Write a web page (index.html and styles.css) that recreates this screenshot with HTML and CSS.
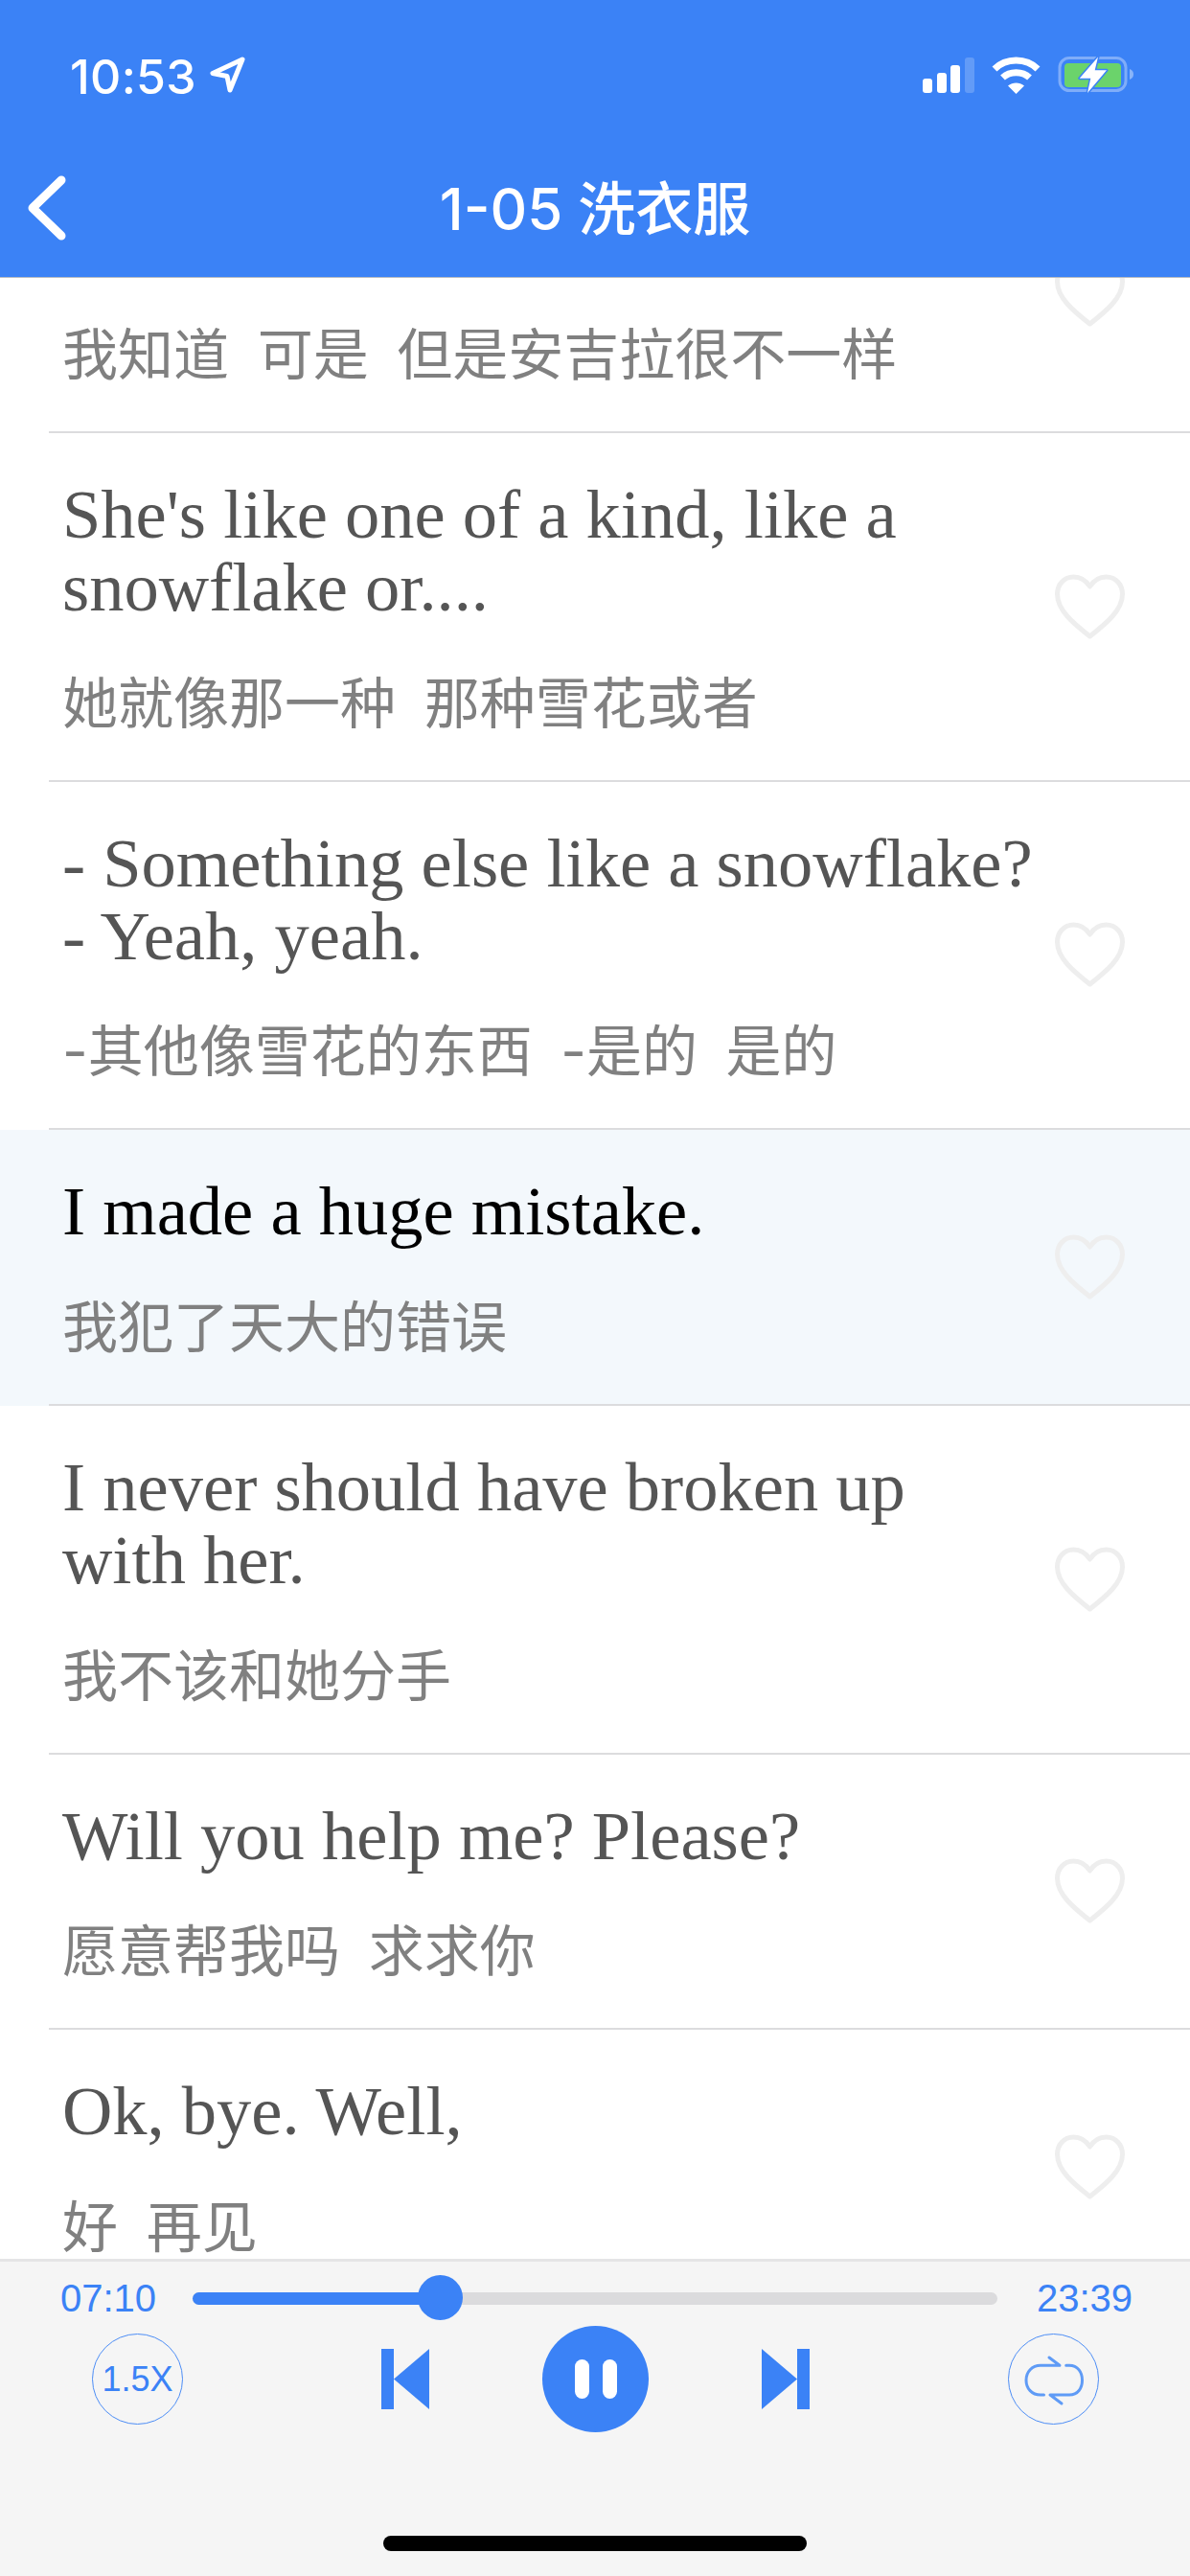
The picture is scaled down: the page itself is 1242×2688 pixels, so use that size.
FILE: index.html
```html
<!DOCTYPE html>
<html lang="zh-CN">
<head>
<meta charset="utf-8">
<title>1-05 洗衣服</title>
<link rel="stylesheet" href="styles.css">
</head>
<body>
<div class="app">
  <header class="header">
    <div class="status">
      <div class="clock">
        <span class="clock-time">10:53</span>
        <svg class="loc" width="38" height="38" viewBox="0 0 38 38"><path d="M34 3 3 17.500 18 20.500 21 35Z" fill="none" stroke="#fff" stroke-width="5" stroke-linejoin="round"/></svg>
      </div>
      <div class="status-icons">
        <svg width="54" height="38" viewBox="0 0 54 38"><rect x="0" y="23" width="10" height="15" rx="3" fill="#fff"/><rect x="15" y="17" width="10" height="21" rx="3" fill="#fff"/><rect x="29" y="9" width="10" height="29" rx="3" fill="#fff"/><rect x="44" y="1" width="10" height="37" rx="3" fill="#fff" opacity=".2"/></svg>
        <svg width="51" height="39" viewBox="0 0 51 39"><path d="M3 13C15 1 36 1 48 13" fill="none" stroke="#fff" stroke-width="7"/><path d="M11.500 22C19 15 32 15 39.500 22" fill="none" stroke="#fff" stroke-width="7"/><path d="M17 30.500C22 26.500 29 26.500 34 30.500L25.500 39Z" fill="#fff"/></svg>
        <svg width="79" height="40" viewBox="0 0 79 40"><rect x="2" y="2.500" width="69" height="34" rx="10" fill="none" stroke="#fff" stroke-opacity=".35" stroke-width="3"/><rect x="7" y="8" width="59" height="25" rx="4" fill="#6bd36b"/><path d="M75 14c3 1 4 3 4 5.500s-1 4.500-4 5.500z" fill="#fff" fill-opacity=".4"/><path d="M42 1.500 22.700 23.700H34.300L31 39 51 15.300H38.700Z" fill="#fff" stroke="#3b82f6" stroke-width="3" stroke-linejoin="round" paint-order="stroke"/></svg>
      </div>
    </div>
    <nav class="nav">
      <svg class="back" width="42" height="72" viewBox="0 0 42 72"><path d="M36 6 6 35 36 64" fill="none" stroke="#fff" stroke-width="9" stroke-linecap="round" stroke-linejoin="round"/></svg>
      <h1 class="title">1-05 洗衣服</h1>
    </nav>
  </header>

  <main class="list">
    <div class="list-scroll">
      <div class="row">
        <div class="row-inner">
          <div class="texts"><div class="en">&nbsp;</div><div class="cn">我知道  可是  但是安吉拉很不一样</div></div>
          <svg class="heart" width="73" height="68" viewBox="0 0 73 68"><path d="M36.500 13C32 6 26 3 19.500 3 9.500 3 2.500 11 2.500 21 2.500 38 20 52 36.500 65 53 52 70.500 38 70.500 21 70.500 11 63.500 3 53.500 3 47 3 41 6 36.500 13Z"/></svg>
        </div>
      </div>
      <div class="row">
        <div class="row-inner">
          <div class="texts"><div class="en">She's like one of a kind, like a snowflake or....</div><div class="cn">她就像那一种  那种雪花或者</div></div>
          <svg class="heart" width="73" height="68" viewBox="0 0 73 68"><path d="M36.500 13C32 6 26 3 19.500 3 9.500 3 2.500 11 2.500 21 2.500 38 20 52 36.500 65 53 52 70.500 38 70.500 21 70.500 11 63.500 3 53.500 3 47 3 41 6 36.500 13Z"/></svg>
        </div>
      </div>
      <div class="row">
        <div class="row-inner">
          <div class="texts"><div class="en">- Something else like a snowflake?<br>- Yeah, yeah.</div><div class="cn">-其他像雪花的东西  -是的  是的</div></div>
          <svg class="heart" width="73" height="68" viewBox="0 0 73 68"><path d="M36.500 13C32 6 26 3 19.500 3 9.500 3 2.500 11 2.500 21 2.500 38 20 52 36.500 65 53 52 70.500 38 70.500 21 70.500 11 63.500 3 53.500 3 47 3 41 6 36.500 13Z"/></svg>
        </div>
      </div>
      <div class="row row-active">
        <div class="row-inner">
          <div class="texts"><div class="en">I made a huge mistake.</div><div class="cn">我犯了天大的错误</div></div>
          <svg class="heart" width="73" height="68" viewBox="0 0 73 68"><path d="M36.500 13C32 6 26 3 19.500 3 9.500 3 2.500 11 2.500 21 2.500 38 20 52 36.500 65 53 52 70.500 38 70.500 21 70.500 11 63.500 3 53.500 3 47 3 41 6 36.500 13Z"/></svg>
        </div>
      </div>
      <div class="row">
        <div class="row-inner">
          <div class="texts"><div class="en">I never should have broken up with her.</div><div class="cn">我不该和她分手</div></div>
          <svg class="heart" width="73" height="68" viewBox="0 0 73 68"><path d="M36.500 13C32 6 26 3 19.500 3 9.500 3 2.500 11 2.500 21 2.500 38 20 52 36.500 65 53 52 70.500 38 70.500 21 70.500 11 63.500 3 53.500 3 47 3 41 6 36.500 13Z"/></svg>
        </div>
      </div>
      <div class="row">
        <div class="row-inner">
          <div class="texts"><div class="en">Will you help me? Please?</div><div class="cn">愿意帮我吗  求求你</div></div>
          <svg class="heart" width="73" height="68" viewBox="0 0 73 68"><path d="M36.500 13C32 6 26 3 19.500 3 9.500 3 2.500 11 2.500 21 2.500 38 20 52 36.500 65 53 52 70.500 38 70.500 21 70.500 11 63.500 3 53.500 3 47 3 41 6 36.500 13Z"/></svg>
        </div>
      </div>
      <div class="row">
        <div class="row-inner">
          <div class="texts"><div class="en">Ok, bye. Well,</div><div class="cn">好  再见</div></div>
          <svg class="heart" width="73" height="68" viewBox="0 0 73 68"><path d="M36.500 13C32 6 26 3 19.500 3 9.500 3 2.500 11 2.500 21 2.500 38 20 52 36.500 65 53 52 70.500 38 70.500 21 70.500 11 63.500 3 53.500 3 47 3 41 6 36.500 13Z"/></svg>
        </div>
      </div>
    </div>
  </main>

  <footer class="player">
    <div class="progress-row">
      <span class="time">07:10</span>
      <div class="track">
        <div class="fill" style="width:30.8%"><span class="thumb"></span></div>
      </div>
      <span class="time">23:39</span>
    </div>
    <div class="controls">
      <div class="ring speed">1.5X</div>
      <div class="transport">
        <svg width="50" height="63" viewBox="0 0 50 63"><rect width="13" height="63" fill="#3b82f6"/><path d="M13 31.500 50 0V63Z" fill="#3b82f6"/></svg>
        <div class="play">
          <span class="pause-bar"></span><span class="pause-bar"></span>
        </div>
        <svg width="50" height="63" viewBox="0 0 50 63"><rect x="37" width="13" height="63" fill="#3b82f6"/><path d="M37 31.500 0 0V63Z" fill="#3b82f6"/></svg>
      </div>
      <div class="ring">
        <svg width="95" height="95" viewBox="0 0 95 95"><g fill="none" stroke="#5f9bf6" stroke-width="3" stroke-linecap="round" stroke-linejoin="round"><path d="M43 25l11 8.300H34C25 33.300 19 40 19 48.700S25 64 34 64H37.500"/><path d="M56 73l-12-9H64C73 64 77.500 57 77.500 48.700S73 33.300 64 33.300H60.700"/></g></svg>
      </div>
    </div>
    <div class="home-bar"></div>
  </footer>
</div>
</body>
</html>
```

FILE: styles.css
```css
* { box-sizing: border-box; }
html, body { margin: 0; padding: 0; }
body { background: #fff; font-family: "Liberation Sans", "Noto Sans CJK SC", sans-serif; }

.app { width: 1242px; height: 2688px; display: flex; flex-direction: column; overflow: hidden; }

.header { flex: none; height: 290px; background: #3b82f6; border-bottom: 1px solid #b9bcc2; padding-top: 58px; color: #fff; position: relative; z-index: 1; }
.status { height: 40px; display: flex; justify-content: space-between; align-items: center; padding: 0 59px 0 73px; }
.clock { display: flex; align-items: center; gap: 14px; }
.clock-time { font-family: Inter, "Liberation Sans", sans-serif; font-size: 50px; font-weight: 500; line-height: 40px; letter-spacing: .3px; padding-top: 4px; }
.loc { display: block; }
.status-icons { display: flex; align-items: center; gap: 18px; }
.status-icons svg { display: block; }

.nav { margin-top: 58px; height: 124px; display: grid; grid-template-columns: 1fr auto 1fr; align-items: center; padding-left: 28px; padding-right: 28px; }
.back { display: block; }
.title { margin: 0; font-size: 60px; font-weight: 500; line-height: 124px; white-space: nowrap; font-family: Inter, "Noto Sans CJK SC", sans-serif; }

.list { flex: 1; min-height: 0; overflow: hidden; }
.list-scroll { margin-top: -125.67px; }
.row-active { background: #f3f8fc; }
.row-inner { margin-left: 51px; padding: 0 68px 0 14px; display: flex; align-items: center; gap: 16px; border-bottom: 2px solid #dcdcde; }
.texts { flex: 1; min-width: 0; padding: 47px 0 40px; }
.en { font-family: "Liberation Serif", serif; font-size: 72.5px; line-height: 76px; color: #555; }
.cn { margin-top: 42.67px; font-family: Inter, "Noto Sans CJK SC", sans-serif; font-size: 58px; line-height: 80px; color: #808080; white-space: pre-wrap; word-spacing: -1.5px; }
.row-active .en { color: #000; }
.heart { flex: none; display: block; fill: none; stroke: #eeeeee; stroke-width: 5; stroke-linejoin: round; }

.player { flex: none; height: 331px; background: #f5f5f5; border-top: 3px solid #e5e5e6; padding-top: 9px; }
.progress-row { height: 58px; padding: 0 60px 0 63px; display: flex; align-items: center; gap: 38px; }
.time { font-size: 40px; line-height: 58px; color: #3b82f6; }
.track { flex: 1; height: 13px; margin-right: 3px; border-radius: 7px; background: #dbdbdd; }
.fill { position: relative; height: 100%; background: #3b82f6; border-radius: 7px 0 0 7px; }
.thumb { position: absolute; right: -23px; top: -18px; width: 47px; height: 47px; border-radius: 50%; background: #3b82f6; }

.controls { height: 111px; padding: 0 95px 0 96px; display: flex; align-items: center; justify-content: space-between; }
.ring { width: 95px; height: 95px; border: 1.5px solid #4c8df6; border-radius: 50%; display: flex; align-items: center; justify-content: center; overflow: visible; }
.ring svg { flex: none; display: block; }
.speed { font-size: 36px; color: #3b82f6; white-space: nowrap; }
.transport { display: flex; align-items: center; gap: 118px; }
.transport svg { display: block; }
.play { width: 111px; height: 111px; border-radius: 50%; background: #3b82f6; display: flex; align-items: center; justify-content: center; gap: 14px; }
.pause-bar { width: 15px; height: 41px; border-radius: 8px; background: #fff; }

.home-bar { width: 442px; height: 16px; margin: 108px auto 0; border-radius: 8px; background: #000; }
```
